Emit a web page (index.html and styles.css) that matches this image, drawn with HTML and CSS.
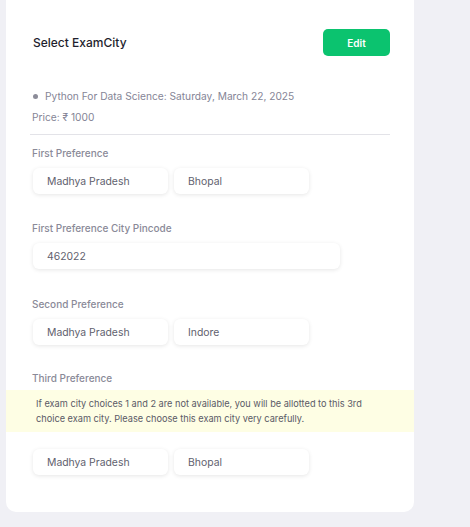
FILE: index.html
```html
<!DOCTYPE html>
<html>
<head>
<meta charset="utf-8">
<link rel="stylesheet" href="styles.css">
</head>
<body>
<div class="card">
  <div class="header">
    <div class="title">Select ExamCity</div>
    <button class="edit">Edit</button>
  </div>
  <div class="course"><span class="dot"></span>Python For Data Science: Saturday, March 22, 2025</div>
  <div class="price">Price: ₹ 1000</div>
  <div class="divider"></div>

  <div class="section first">
    <div class="label">First Preference</div>
    <div class="row">
      <div class="field">Madhya Pradesh</div>
      <div class="field">Bhopal</div>
    </div>
  </div>

  <div class="section pincode">
    <div class="label">First Preference City Pincode</div>
    <div class="row">
      <div class="field wide">462022</div>
    </div>
  </div>

  <div class="section second">
    <div class="label">Second Preference</div>
    <div class="row">
      <div class="field">Madhya Pradesh</div>
      <div class="field">Indore</div>
    </div>
  </div>

  <div class="section third">
    <div class="label">Third Preference</div>
    <div class="notice">If exam city choices 1 and 2 are not available, you will be allotted to this 3rd choice exam city. Please choose this exam city very carefully.</div>
    <div class="row after-notice">
      <div class="field">Madhya Pradesh</div>
      <div class="field">Bhopal</div>
    </div>
  </div>
</div>
</body>
</html>
```

FILE: styles.css
```css
html, body {
  margin: 0;
  padding: 0;
  background: #f0f0f5;
  font-family: Inter, "Noto Sans", sans-serif;
}
body {
  height: 527px;
  overflow: hidden;
}
.card {
  margin-left: 6px;
  width: 408px;
  box-sizing: border-box;
  background: #ffffff;
  border-radius: 0 0 10px 10px;
  padding: 29px 24px 37px 26px;
}
.header {
  display: flex;
  justify-content: space-between;
  align-items: center;
  height: 27px;
}
.title {
  font-size: 12px;
  font-weight: 500;
  color: #1f1f2e;
  padding-left: 1px;
}
.edit {
  width: 67px;
  height: 27px;
  border: none;
  border-radius: 5px;
  background: #0bc36f;
  color: #ffffff;
  font-family: Inter, sans-serif;
  font-size: 10px;
  font-weight: 600;
  padding: 0;
}
.course {
  margin-top: 32px;
  display: flex;
  align-items: center;
  font-size: 10.2px;
  line-height: 16px;
  color: #858596;
}
.dot {
  width: 5px;
  height: 5px;
  border-radius: 50%;
  background: #8c8c99;
  margin: 0 7px 0 1px;
}
.price {
  margin-top: 5px;
  font-size: 10.2px;
  line-height: 16px;
  color: #858596;
}
.divider {
  margin: 9px 0 0 -2px;
  height: 1px;
  background: #e3e3e8;
}
.section.first {
  margin-top: 11px;
}
.section.pincode {
  margin-top: 27px;
}
.section.second {
  margin-top: 28px;
}
.section.third {
  margin-top: 26px;
}
.label {
  font-size: 10px;
  font-weight: 500;
  line-height: 14px;
  color: #8a8a98;
}
.row {
  display: flex;
  gap: 6px;
  margin-top: 8px;
  padding-left: 1px;
}
.field {
  width: 135px;
  height: 26px;
  box-sizing: border-box;
  padding-left: 14px;
  display: flex;
  align-items: center;
  border-radius: 6px;
  background: #ffffff;
  box-shadow: 0 1px 4px rgba(0, 0, 0, 0.1);
  font-size: 10.4px;
  color: #5f5f6e;
}
.field.wide {
  width: 307px;
}
.notice {
  margin: 5px -24px 0 -26px;
  padding: 6px 40px 6px 30px;
  background: #fefee4;
  font-size: 9.2px;
  line-height: 15px;
  color: #5a5a66;
}
.row.after-notice {
  margin-top: 17px;
}
```
